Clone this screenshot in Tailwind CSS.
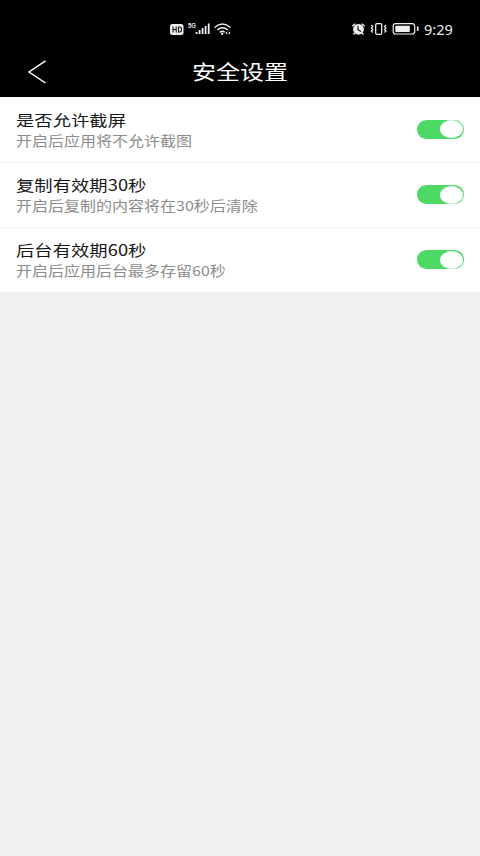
<!DOCTYPE html>
<html lang="zh-CN">
<head>
<meta charset="utf-8">
<title>安全设置</title>
<script src="https://cdn.jsdelivr.net/npm/@tailwindcss/browser@4"></script>
</head>
<body class="min-h-screen bg-[#f0f0f0] font-['Noto_Sans_CJK_SC',sans-serif]">
<header class="h-[97px] bg-black text-white">
  <div class="flex h-[50px] items-center pt-2 pl-[170px] pr-[26px]">
    <svg class="h-5 w-[62px]" viewBox="170 19 62 20" fill="none" stroke="#eee">
      <rect x="170" y="24" width="13.5" height="11" rx="2.5" fill="#eee" stroke="none"/>
      <path d="M173 26.5v6M176.200 26.500v6M173 29.500h3M178.500 27v5h1.200q1.800 0 1.800-2.500t-1.800-2.500z" stroke="#111" stroke-width="1.100"/>
      <text x="188" y="28" font-size="6.500" font-weight="700" fill="#eee" stroke="none" textLength="8" lengthAdjust="spacingAndGlyphs" font-family="Liberation Sans">5G</text>
      <path d="M196.600 34v-2M199.600 34v-4M202.600 34v-6M205.600 34v-8M208.700 34v-10.500" stroke-width="1.800"/>
      <path d="M214.500 27.500q8-7 16 0M217.200 30q5.300-4.500 10.600 0M219.700 32.300q2.800-2.200 5 0" stroke-width="1.500"/>
      <circle cx="222.200" cy="33.700" r="1.200" fill="#eee" stroke="none"/>
      <path d="M227.200 31.200l-1.800 1.800 1.800 1.800zM228.800 31.200l1.800 1.800-1.800 1.800z" fill="#eee" stroke="none"/>
    </svg>
    <svg class="ml-auto h-5 w-[70px]" viewBox="350 19 70 20" fill="none" stroke="#eee">
      <circle cx="358.500" cy="29.300" r="5.400" fill="#eee" stroke="none"/>
      <path d="M352.300 26.300l3-2.600M364.700 26.300l-3-2.600M355 33l-1.500 1.500M362 33l1.500 1.500" stroke-width="1.500"/>
      <path d="M358 26v3.700l3 1.800" stroke="#000" stroke-width="1.100"/>
      <rect x="375.700" y="23.700" width="6" height="10.600" rx="1" stroke-width="1.300"/>
      <path d="M371.300 25l1.500 1.500-1.500 1.500 1.500 1.500-1.500 1.500 1.500 1.500M386 25l-1.500 1.500 1.500 1.500-1.500 1.500 1.500 1.500-1.500 1.500" stroke-width="1.200"/>
      <rect x="393.200" y="23.700" width="21.500" height="10.300" rx="2.500" stroke-width="1.200"/>
      <rect x="395.300" y="25.700" width="14.500" height="6.300" rx=".8" fill="#eee" stroke="none"/>
      <path d="M417.700 26.500v4.500" stroke-width="1.600"/>
    </svg>
    <span class="ml-1 w-[30px] whitespace-nowrap font-['Noto_Sans'] text-[14.500px] leading-5 text-[#eee]">9:29</span>
  </div>
  <div class="grid h-[47px] grid-cols-[1fr_auto_1fr] items-center">
    <svg class="ml-[27px] h-[26px] w-5 -translate-y-0.5" viewBox="0 0 20 26" fill="none" stroke="#fff" stroke-width="1.500"><path d="M18.500 1.800L2 13l16.500 11"/></svg>
    <h1 class="-translate-y-0.5 scale-y-[.83] text-[24px] leading-7">安全设置</h1>
  </div>
</header>
<main class="bg-white text-[#181818]">
  <section class="flex h-[65.500px] items-center justify-between border-b border-[#f4f4f4] px-4">
    <div>
      <h2 class="scale-y-[.83] text-[18.350px] leading-[21px]">是否允许截屏</h2>
      <p class="scale-y-[.83] text-[16px] leading-5 text-[#8c8c8c]">开启后应用将不允许截图</p>
    </div>
    <div class="flex h-[19px] w-[47px] justify-end rounded-[10px] bg-[#4cd964] py-[.5px] pr-px"><i class="w-[23px] rounded-[50%] bg-white"></i></div>
  </section>
  <section class="flex h-[65px] items-center justify-between border-b border-[#f4f4f4] px-4">
    <div>
      <h2 class="scale-y-[.83] text-[18.350px] leading-[21px]">复制有效期30秒</h2>
      <p class="scale-y-[.83] text-[16px] leading-5 text-[#8c8c8c]">开启后复制的内容将在30秒后清除</p>
    </div>
    <div class="flex h-[19px] w-[47px] justify-end rounded-[10px] bg-[#4cd964] py-[.5px] pr-px"><i class="w-[23px] rounded-[50%] bg-white"></i></div>
  </section>
  <section class="flex h-[64.500px] items-center justify-between px-4">
    <div>
      <h2 class="scale-y-[.83] text-[18.350px] leading-[21px]">后台有效期60秒</h2>
      <p class="scale-y-[.83] text-[16px] leading-5 text-[#8c8c8c]">开启后应用后台最多存留60秒</p>
    </div>
    <div class="flex h-[19px] w-[47px] justify-end rounded-[10px] bg-[#4cd964] py-[.5px] pr-px"><i class="w-[23px] rounded-[50%] bg-white"></i></div>
  </section>
</main>
</body>
</html>
